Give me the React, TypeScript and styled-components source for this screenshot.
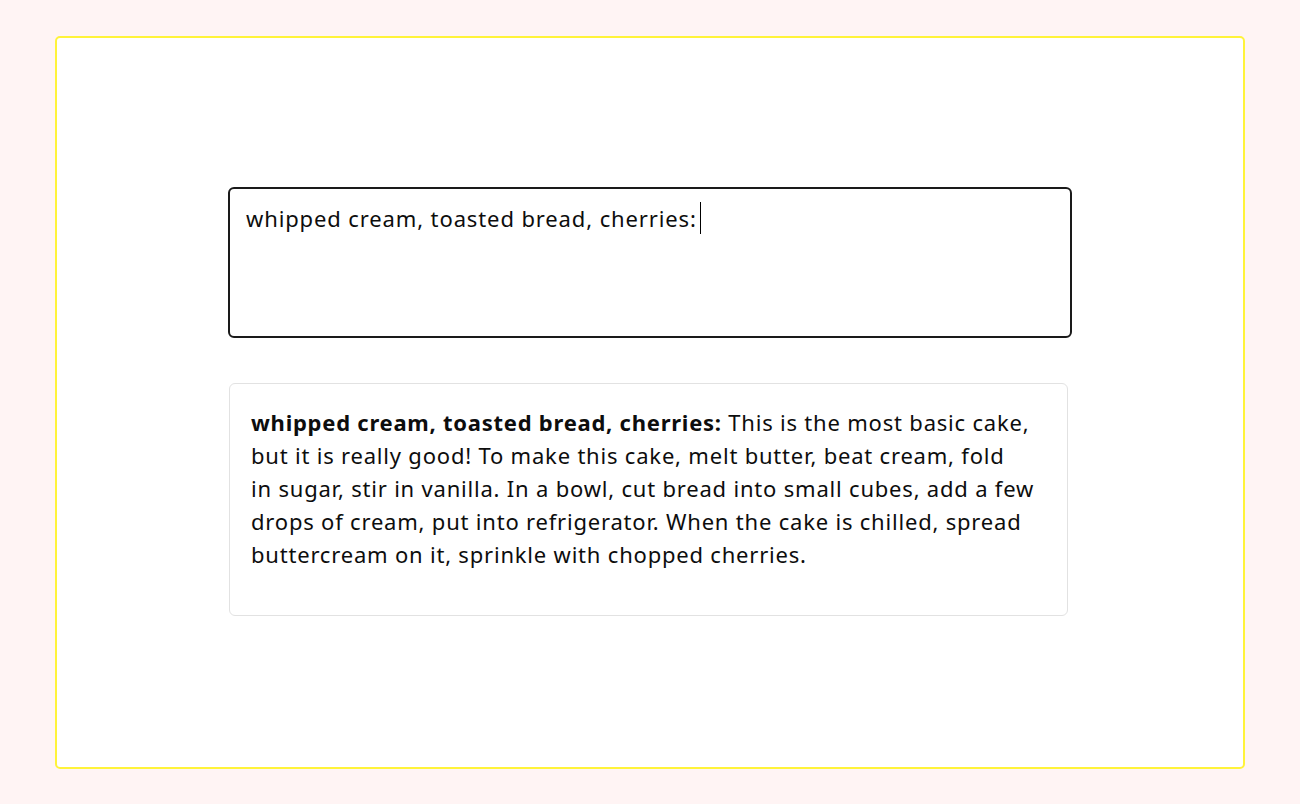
import React from "react";
import styled, { createGlobalStyle } from "styled-components";

const Global = createGlobalStyle`
  html, body { margin: 0; padding: 0; background: #fff4f4; }
  body { font-family: "Noto Sans", "Open Sans", sans-serif; color: #000; }
`;

const Page = styled.div`
  width: 1300px;
  height: 804px;
  box-sizing: border-box;
  padding: 36px 55px 35px 55px;
  display: flex;
`;

const Frame = styled.div`
  flex: 1;
  box-sizing: border-box;
  background: #fff;
  border: 2px solid #fff33a;
  border-radius: 5px;
  display: flex;
  flex-direction: column;
  align-items: center;
  padding-top: 149px;
  gap: 45px;
`;

const Input = styled.div`
  width: 844px;
  height: 151px;
  box-sizing: border-box;
  border: 2px solid #1a1a1a;
  border-radius: 6px;
  padding: 13px 16px;
  font-size: 22px;
  letter-spacing: 0.88px;
  line-height: 32px;
  color: #0d0d0d;
  display: flex;
  align-items: flex-start;
`;

const Caret = styled.span`
  display: inline-block;
  width: 1.5px;
  height: 32px;
  background: #000;
  margin-left: 3px;
`;

const Card = styled.div`
  width: 839px;
  height: 233px;
  box-sizing: border-box;
  border: 1px solid #e2e2e2;
  border-radius: 6px;
  padding: 22px 10px 0 21px;
  font-size: 22px;
  letter-spacing: 0.8px;
  line-height: 33px;
  color: #0d0d0d;
  white-space: nowrap;
  margin-left: -3px;
`;

const Bold = styled.b`
  font-weight: 700;
  letter-spacing: 0.75px;
`;

export default function App() {
  return (
    <>
      <Global />
      <Page>
        <Frame>
          <Input>
            <span>whipped cream, toasted bread, cherries:</span>
            <Caret />
          </Input>
          <Card>
            <Bold>whipped cream, toasted bread, cherries:</Bold> This is the most basic cake,
            <br />
            but it is really good! To make this cake, melt butter, beat cream, fold
            <br />
            in sugar, stir in vanilla. In a bowl, cut bread into small cubes, add a few
            <br />
            drops of cream, put into refrigerator. When the cake is chilled, spread
            <br />
            buttercream on it, sprinkle with chopped cherries.
          </Card>
        </Frame>
      </Page>
    </>
  );
}
